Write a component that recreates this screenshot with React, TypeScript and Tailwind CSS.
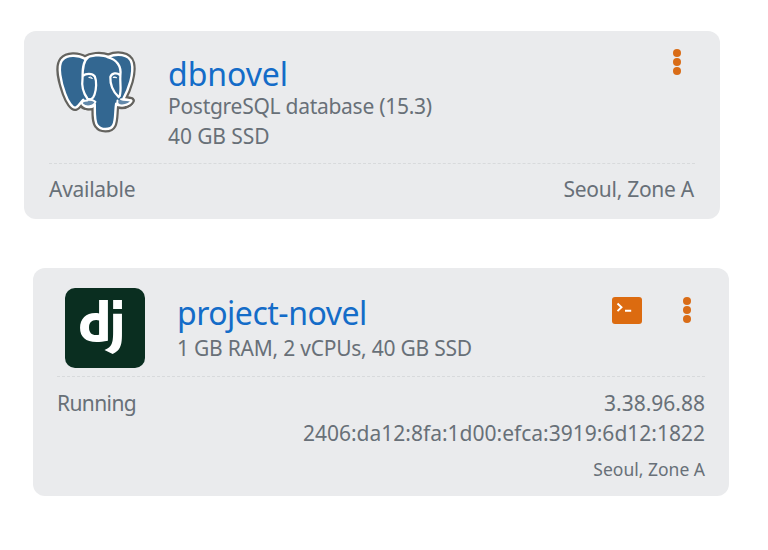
import React from "react";
import { SiDjango } from "react-icons/si";

function PostgresLogo() {
  const body =
    "M103 43C82 30 48 30 33 47C18 66 29 114 42 149C51 173 65 196 76 191C84 188 91 174 98 168L97 180C104 192 124 194 134 183C134 207 132 234 142 246C152 261 183 261 191 245C199 230 196 203 200 180C211 190 240 183 247 171L222 165C238 136 256 88 248 56C240 27 201 27 176 37C151 28 121 32 103 43Z";
  return (
    <svg className="block h-[84px] w-[80px]" viewBox="18 21 240 252" fill="none" strokeLinejoin="round" strokeLinecap="round">
      <g transform="translate(4.5 2) scale(.97 .985)">
        <path d={body} stroke="#64635f" strokeWidth="21" />
        <path d="M98 172C84 177 93 190 113 191Q128 190 136 179M201 178Q201 189 218 188C233 188 249 176 247 168L222 163" stroke="#64635f" strokeWidth="18" />
        <path d={body} fill="#336791" stroke="#fff" strokeWidth="7.5" />
        <path d="M111 170C98 170 91 175 96 182C107 192 131 190 136 174C126 167 118 168 111 165M204 170C201 181 207 185 218 185C232 185 246 177 246 170C235 167 224 171 215 166" fill="#6389aa" stroke="#fff" strokeWidth="6" />
        <path d="M112 40C96 51 96 81 96 102C92 130 98 147 111 164C118 170 128 167 133 152C139 136 140 111 134 97C126 86 106 87 97 95M173 38C202 45 217 66 213 94C211 118 217 134 211 156M211 92C202 84 187 86 182 98C181 120 190 143 208 160" stroke="#fff" strokeWidth="7" />
        <path d="M116 99Q121 96 126 102ZM191 99Q196 96 201 100Z" stroke="#fff" strokeWidth="3" />
      </g>
    </svg>
  );
}

function DjangoLogo() {
  return (
    <div className="h-[80px] w-[80px] rounded-[10px] bg-[#0a2e20] pt-[12px] pl-[9px]">
      <SiDjango className="block h-[54px] w-[54px] text-white" />
    </div>
  );
}

function MoreButton() {
  return (
    <button aria-label="Actions" className="flex h-[26px] w-[8px] flex-col justify-between">
      <i className="h-[8px] w-[8px] rounded-full bg-[#d96c17]" />
      <i className="h-[8px] w-[8px] rounded-full bg-[#d96c17]" />
      <i className="h-[8px] w-[8px] rounded-full bg-[#d96c17]" />
    </button>
  );
}

function TerminalButton() {
  return (
    <button aria-label="Connect" className="h-[27px] w-[30px] rounded-[3px] bg-[#dc6b10]">
      <svg className="block h-[27px] w-[30px]" viewBox="0 0 30 27" fill="none" stroke="#fff" strokeWidth="1.9">
        <path d="M5.5 6.5L9.5 10.3L5.5 14.1M13 13.8H19.2" />
      </svg>
    </button>
  );
}

export default function App() {
  return (
    <main className="h-[550px] w-[768px] overflow-hidden bg-white pt-[31px] pl-[24px] font-['Noto_Sans','Open_Sans',sans-serif] text-[21px] leading-[30px] tracking-[-0.27px] whitespace-nowrap text-[#687078]">
      <section className="h-[188px] w-[696px] rounded-[12px] bg-[#eaebed] px-[25px] pt-[20px]">
        <div className="flex h-[112px] pl-[7px]">
          <PostgresLogo />
          <div className="ml-[32px] flex-1">
            <h2 className="h-[40px] text-[32px] leading-[46px] tracking-[-0.05px] text-[#146cc8]"><span>dbnovel</span></h2>
            <p><span>PostgreSQL database (15.3)</span></p>
            <p className="tracking-[-0.1px]"><span>40 GB SSD</span></p>
          </div>
          <div className="mt-[-2px] mr-[14px]"><MoreButton /></div>
        </div>
        <div className="flex justify-between border-t border-dashed border-[#d8dadc] pt-[10px]">
          <span>Available</span>
          <span className="mr-[1px]">Seoul, Zone A</span>
        </div>
      </section>

      <section className="mt-[49px] ml-[9px] h-[228px] w-[696px] rounded-[12px] bg-[#eaebed] px-[24px] pt-[20px]">
        <div className="flex h-[88px] pl-[8px]">
          <DjangoLogo />
          <div className="ml-[32px] flex-1">
            <h2 className="h-[45px] text-[32px] leading-[49px] tracking-[-0.5px] text-[#146cc8]"><span>project-novel</span></h2>
            <p className="tracking-[-0.23px]"><span>1 GB RAM, 2 vCPUs, 40 GB SSD</span></p>
          </div>
          <div className="mt-[9px] mr-[14px] flex gap-[41px]">
            <TerminalButton />
            <MoreButton />
          </div>
        </div>
        <div className="flex justify-between border-t border-dashed border-[#d8dadc] pt-[11px]">
          <span className="tracking-[-0.6px]">Running</span>
          <div className="text-right tracking-normal">
            <p>3.38.96.88</p>
            <p>2406:da12:8fa:1d00:efca:3919:6d12:1822</p>
            <p className="mt-[6px] text-[17.5px]">Seoul, Zone A</p>
          </div>
        </div>
      </section>
    </main>
  );
}
